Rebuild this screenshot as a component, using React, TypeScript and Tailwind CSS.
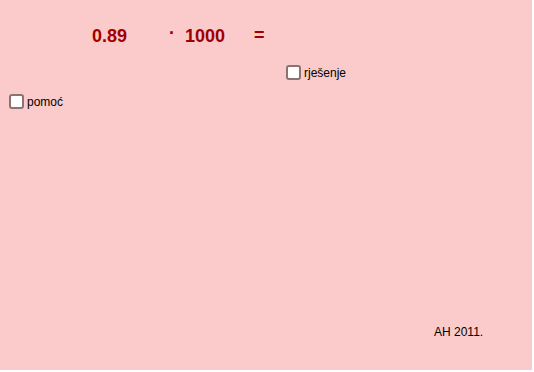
export default function App() {
  const num = "absolute text-[18px] leading-[20px] font-bold text-[#a00000]";
  return (
    <div className="w-[534px] h-[372px] bg-white" style={{ fontFamily: '"Liberation Sans", Arial, sans-serif' }}>
      <div className="relative w-[532px] h-[370px] bg-[#fbcaca]">
        <div className={`${num} left-[92px] top-[26px]`}>0.89</div>
        <div className={`${num} left-[169px] top-[23px]`}>·</div>
        <div className={`${num} left-[185px] top-[26px]`}>1000</div>
        <div className={`${num} left-[254px] top-[25px]`}>=</div>

        <label className="absolute left-[286px] top-[65px] flex items-center gap-[3px]">
          <span className="w-[15px] h-[15px] rounded-[3px] border-2 border-[#8c7272] bg-white" />
          <span className="text-[12px] leading-[14px] text-black">rješenje</span>
        </label>

        <label className="absolute left-[9px] top-[94px] flex items-center gap-[3px]">
          <span className="w-[15px] h-[15px] rounded-[3px] border-2 border-[#8c7272] bg-white" />
          <span className="text-[12px] leading-[14px] text-black">pomoć</span>
        </label>

        <div className="absolute left-[434px] top-[325px] text-[12px] leading-[14px] text-black">AH 2011.</div>
      </div>
    </div>
  );
}
